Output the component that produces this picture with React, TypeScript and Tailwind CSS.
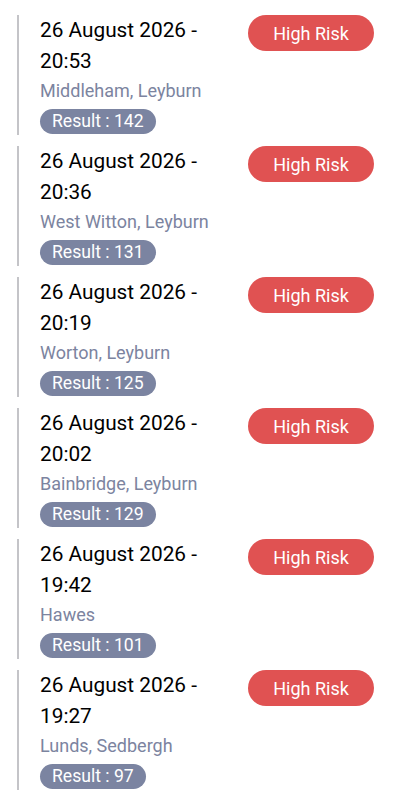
import React from "react";

const entries = [
  { date: "26 August 2026 - 20:53", place: "Middleham, Leyburn", result: 142 },
  { date: "26 August 2026 - 20:36", place: "West Witton, Leyburn", result: 131 },
  { date: "26 August 2026 - 20:19", place: "Worton, Leyburn", result: 125 },
  { date: "26 August 2026 - 20:02", place: "Bainbridge, Leyburn", result: 129 },
  { date: "26 August 2026 - 19:42", place: "Hawes", result: 101 },
  { date: "26 August 2026 - 19:27", place: "Lunds, Sedbergh", result: 97 },
];

const App = () => {
  return (
    <div className="min-h-[800px] bg-white pt-[15px] pl-[17px] font-['Roboto',sans-serif]">
      <div className="flex flex-col gap-[11px]">
        {entries.map((e) => (
          <div
            key={e.date}
            className="flex h-[120px] border-l-2 border-[#c4c4c8] pl-[21px]"
          >
            <div className="w-[205px] flex flex-col">
              <p className="text-[20.8px] leading-[31px] text-black">{e.date}</p>
              <p className="mt-[1px] text-[18px] leading-[25px] text-[#7c84a0]">
                {e.place}
              </p>
              <div className="mt-[6px]">
                <span className="inline-block h-[25px] rounded-full bg-[#7b84a1] px-[12px] text-[17.6px] leading-[25px] text-white">
                  Result : {e.result}
                </span>
              </div>
            </div>
            <div className="ml-[3px]">
              <span className="inline-flex h-[36px] w-[126px] items-center justify-center rounded-full bg-[#e05252] text-[18px] text-white">
                High Risk
              </span>
            </div>
          </div>
        ))}
      </div>
    </div>
  );
};

export default App;
